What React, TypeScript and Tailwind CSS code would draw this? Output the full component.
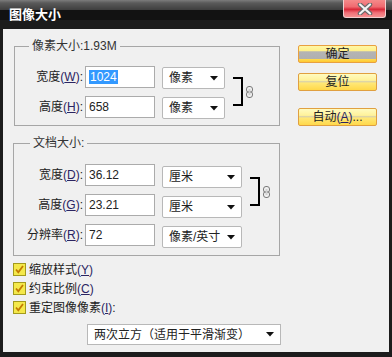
import React from "react";

const Mn = ({ pre, k, colon = true }: { pre: string; k: string; colon?: boolean }) => (
  <span>
    {pre}
    <span className="text-[#2a2462]">
      (<span className="underline">{k}</span>)
    </span>
    {colon ? ":" : ""}
  </span>
);

const Arrow = () => (
  <svg width="8" height="5" viewBox="0 0 8 5">
    <path d="M0 0h8L4 4.5z" fill="#111" />
  </svg>
);

const Select = ({ label, className }: { label: string; className: string }) => (
  <div className={"flex h-[22px] items-center justify-between rounded-[2px] border border-[#b8b8b8] bg-white pl-[6px] pr-[6px] " + className}>
    <span>{label}</span>
    <Arrow />
  </div>
);

const Field = ({ value, selected }: { value: string; selected?: boolean }) => (
  <div className="h-[22px] w-[70px] border border-[#ababab] bg-white pl-[3px] leading-[20px]">
    {selected ? <span className="bg-[#3399ff] px-[1px] text-white">{value}</span> : value}
  </div>
);

const Link = () => (
  <svg width="7" height="12" viewBox="0 0 7 12">
    <rect x="0.5" y="0.5" width="6" height="6" rx="2.5" fill="none" stroke="#7a7a7a" />
    <rect x="0.5" y="5.5" width="6" height="6" rx="2.5" fill="none" stroke="#7a7a7a" />
    <rect x="2.5" y="3" width="2" height="6" fill="#d0d0d0" />
  </svg>
);

const Check = ({ children }: { children: React.ReactNode }) => (
  <div className="flex h-[19px] items-center">
    <svg width="13" height="13" viewBox="0 0 13 13">
      <rect x="0.5" y="0.5" width="12" height="12" fill="#f4e84a" stroke="#a39a1c" />
      <path d="M3 6.5l2.3 2.8L10 3" fill="none" stroke="#c47a00" strokeWidth="1.8" />
    </svg>
    <span className="ml-[3px]">{children}</span>
  </div>
);

const Btn = ({ children, pressed }: { children: React.ReactNode; pressed?: boolean }) => (
  <div
    className={
      pressed
        ? "flex h-[18px] w-[79px] items-center justify-center rounded-[2px] border border-[#e8a040] bg-[linear-gradient(180deg,#fff7a6_0%,#fff08a_30%,#b4b4b4_36%,#b0b0b0_78%,#ffd94a_84%,#ffc830_100%)] leading-none"
        : "flex h-[18px] w-[79px] items-center justify-center rounded-[2px] border border-[#e0a040] bg-[linear-gradient(180deg,#fffbc0_0%,#fff29a_40%,#d8d0a8_48%,#ffe878_56%,#ffd84a_100%)] leading-none"
    }
  >
    {children}
  </div>
);

export default function App() {
  return (
    <div className="flex h-[357px] w-[392px] flex-col bg-[#1c1c1c] font-['Liberation_Sans','Noto_Sans_CJK_SC',sans-serif] text-[12px] text-[#222]">
      {/* title bar */}
      <div className="flex h-[29px] bg-[linear-gradient(180deg,#7c7c7c_0px,#5a5a5a_3px,#3e3e3e_10px,#121212_10px,#121212_20px,#1c1c1c_20px)]">
        <span className="ml-[9px] mt-[8px] text-[13px] font-bold leading-[14px] text-white">图像大小</span>
        <div className="ml-auto mr-[6px] flex h-[18px] w-[43px] items-center justify-center rounded-b-[3px] border border-t-0 border-[#f2d0d0] bg-[linear-gradient(180deg,#f58a8a_0%,#f06a70_40%,#d82838_55%,#f07078_75%,#f59090_100%)]">
          <svg width="16" height="12" viewBox="0 0 16 12">
            <path d="M3 1.5l10 9M13 1.5l-10 9" stroke="#6a6a6a" strokeWidth="4.5" strokeLinecap="round" />
            <path d="M3 1.5l10 9M13 1.5l-10 9" stroke="#f4f4f4" strokeWidth="2.2" strokeLinecap="round" />
          </svg>
        </div>
      </div>

      {/* client */}
      <div className="mx-[3px] mb-[5px] flex flex-1 bg-[#f0f0f0]">
        <div className="flex w-[277px] flex-col">
          <fieldset className="ml-[11px] mt-[10px] h-[87px] w-[266px] border border-[#a6a6a6]">
            <legend className="ml-[14px] px-[3px] leading-[14px] text-[#333]">像素大小:1.93M</legend>
            <div className="mt-[13px] flex">
              <div className="flex flex-col gap-[8px]">
                <div className="flex items-center gap-[2px]">
                  <span className="w-[68px] text-right"><Mn pre="宽度" k="W" /></span>
                  <Field value="1024" selected />
                </div>
                <div className="flex items-center gap-[2px]">
                  <span className="w-[68px] text-right"><Mn pre="高度" k="H" /></span>
                  <Field value="658" />
                </div>
              </div>
              <div className="ml-[7px] mt-[1px] flex flex-col gap-[8px]">
                <Select label="像素" className="w-[63px]" />
                <Select label="像素" className="w-[63px]" />
              </div>
              <div className="ml-[8px] mt-[11px] h-[29px] w-[10px] border-y-2 border-r-2 border-black" />
              <div className="ml-[3px] mt-[20px]"><Link /></div>
            </div>
          </fieldset>

          <fieldset className="ml-[10px] mt-[10px] h-[120px] w-[267px] border border-[#a6a6a6]">
            <legend className="ml-[16px] px-[3px] leading-[14px] text-[#333]">文档大小:</legend>
            <div className="mt-[14px] flex">
              <div className="flex flex-col gap-[8px]">
                <div className="flex items-center gap-[2px]">
                  <span className="w-[69px] text-right"><Mn pre="宽度" k="D" /></span>
                  <Field value="36.12" />
                </div>
                <div className="flex items-center gap-[2px]">
                  <span className="w-[69px] text-right"><Mn pre="高度" k="G" /></span>
                  <Field value="23.21" />
                </div>
                <div className="flex items-center gap-[2px]">
                  <span className="w-[69px] text-right"><Mn pre="分辨率" k="R" /></span>
                  <Field value="72" />
                </div>
              </div>
              <div className="ml-[7px] mt-[2px] flex flex-col gap-[8px]">
                <Select label="厘米" className="w-[80px]" />
                <Select label="厘米" className="w-[80px]" />
                <Select label="像素/英寸" className="w-[80px]" />
              </div>
              <div className="ml-[8px] mt-[13px] h-[29px] w-[10px] border-y-2 border-r-2 border-black" />
              <div className="ml-[3px] mt-[22px]"><Link /></div>
            </div>
          </fieldset>

          <div className="ml-[10px] mt-[4px] flex flex-col">
            <Check><Mn pre="缩放样式" k="Y" colon={false} /></Check>
            <Check><Mn pre="约束比例" k="C" colon={false} /></Check>
            <Check><Mn pre="重定图像像素" k="I" /></Check>
          </div>

          <div className="ml-[84px] mt-[7px] flex h-[21px] w-[194px] items-center justify-between border border-[#b8b8b8] bg-white pl-[6px] pr-[6px]">
            <span>两次立方（适用于平滑渐变）</span>
            <Arrow />
          </div>
        </div>

        <div className="ml-[18px] mt-[16px] flex flex-col">
          <Btn pressed>确定</Btn>
          <div className="mt-[10px]"><Btn>复位</Btn></div>
          <div className="mt-[17px]">
            <Btn>
              自动<span className="text-[#2a2462]">(<span className="underline">A</span>)</span>...
            </Btn>
          </div>
        </div>
      </div>
    </div>
  );
}
